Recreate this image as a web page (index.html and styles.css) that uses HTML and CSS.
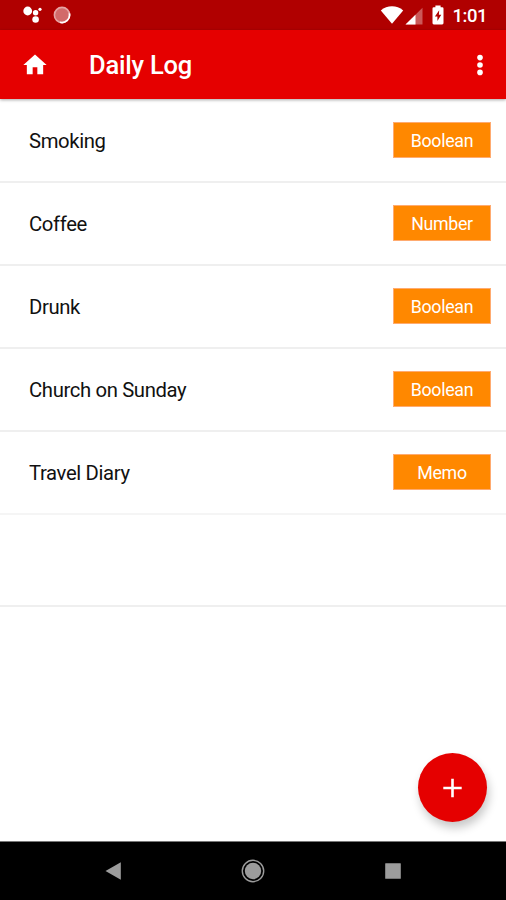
FILE: index.html
```html
<!DOCTYPE html>
<html lang="en">
<head>
  <meta charset="UTF-8">
  <title>Daily Log</title>
  <meta name="viewport" content="width=device-width, initial-scale=1">
  <link rel="stylesheet" href="styles.css">
</head>
<body>
  <div id="app">
    <!-- Status bar -->
    <div id="status-bar">
      <svg class="assistant-icon" width="20" height="18" viewBox="0 0 20 18">
        <circle cx="4.7" cy="5" r="4.4"/>
        <circle cx="12.6" cy="6.7" r="2.7"/>
        <circle cx="17" cy="3.3" r="1.6"/>
        <circle cx="12.6" cy="13.5" r="3.3"/>
      </svg>
      <svg class="sync-icon" width="18" height="18" viewBox="0 0 18 18">
        <circle cx="9" cy="9" r="7.6" fill="#d26a6a" stroke="#e6a3a3" stroke-width="1.6"/>
        <path d="M16.4 7.4A7.6 7.6 0 0 1 7 16.3" fill="none" stroke="#fff" stroke-width="1.7"/>
      </svg>
      <svg class="wifi-icon" width="24" height="18" viewBox="0 0 24 18">
        <path d="M.8 4.4C7.2-1.1 16.8-1.1 23.2 4.4L12 17.8z"/>
      </svg>
      <svg class="signal-icon" width="18" height="18" viewBox="0 0 18 18">
        <path d="M17.5.8V17.5H.5z" fill-opacity=".35"/>
        <path d="M10.5 7.8V17.5H.5z"/>
      </svg>
      <svg class="battery-icon" width="12" height="20" viewBox="0 0 12 20">
        <path d="M3.4.5h5.2v1.7h1.6q1.3 0 1.3 1.3v14.6q0 1.3-1.3 1.3H1.8Q.5 19.4.5 18.1V3.5q0-1.3 1.3-1.3h1.6z"/>
        <path d="M7.2 5.3L2.9 11.5h2.5v4.6l3.9-6.4H6.9z" fill="#b00000"/>
      </svg>
      <span class="clock">1:01</span>
    </div>

    <!-- Toolbar -->
    <div id="toolbar">
      <svg class="home-icon" width="28" height="28" viewBox="0 0 24 24">
        <path d="M10 20v-6h4v6h5v-8h3L12 3 2 12h3v8z"/>
      </svg>
      <h1>Daily Log</h1>
      <svg class="menu-icon" width="8" height="24" viewBox="0 0 8 24">
        <circle cx="4" cy="4.6" r="2.8"/>
        <circle cx="4" cy="12" r="2.8"/>
        <circle cx="4" cy="19.4" r="2.8"/>
      </svg>
    </div>

    <!-- Log items -->
    <div id="log-list">
      <div class="log-item"><span>Smoking</span><button>Boolean</button></div>
      <div class="log-item"><span>Coffee</span><button>Number</button></div>
      <div class="log-item"><span>Drunk</span><button>Boolean</button></div>
      <div class="log-item"><span>Church on Sunday</span><button>Boolean</button></div>
      <div class="log-item last"><span>Travel Diary</span><button>Memo</button></div>
      <div class="log-item empty"></div>
    </div>

    <button id="add-button" aria-label="Add">
      <svg width="20" height="20" viewBox="0 0 20 20">
        <path d="M9.5 .8v18.4M.3 10h18.4"/>
      </svg>
    </button>

    <!-- System navigation -->
    <div id="nav-bar">
      <svg width="24" height="24" viewBox="0 0 24 24">
        <path d="M4.5 12L19.8 3.3v17.4z"/>
      </svg>
      <svg width="24" height="24" viewBox="0 0 24 24">
        <circle cx="12" cy="12" r="8.2"/>
        <circle cx="12" cy="12" r="10.7" fill="none" stroke="#9c9c9c" stroke-width="1.4"/>
      </svg>
      <svg width="24" height="24" viewBox="0 0 24 24">
        <rect x="4.2" y="4.2" width="15.6" height="15.6" rx=".5"/>
      </svg>
    </div>
  </div>
</body>
</html>
```
FILE: styles.css
```css
* {
  box-sizing: border-box;
}
body {
  margin: 0;
  font-family: Roboto, "Liberation Sans", sans-serif;
}
#app {
  position: relative;
  display: flex;
  flex-direction: column;
  height: 900px;
  background: #fff;
  overflow: hidden;
}
/* Status bar */
#status-bar {
  display: flex;
  align-items: center;
  height: 30px;
  padding: 0 19px 0 23px;
  background: #b00000;
  color: #fff;
}
#status-bar svg {
  fill: #fff;
  flex: none;
}
.sync-icon {
  margin-left: 10px;
}
.wifi-icon {
  margin-left: auto;
}
.signal-icon {
  margin: 2px 0 0 1px;
}
.battery-icon {
  margin: 0 9px 0 9px;
}
.clock {
  margin-top: 2px;
  font-size: 18.5px;
  font-weight: 500;
  letter-spacing: -0.5px;
}
/* Toolbar */
#toolbar {
  position: relative;
  display: flex;
  align-items: center;
  height: 69px;
  padding: 0 22px 0 21px;
  background: #e50000;
  color: #fff;
  box-shadow: 0 1px 3px rgba(0, 0, 0, 0.35);
}
#toolbar svg {
  fill: #fff;
}
#toolbar h1 {
  flex: 1;
  margin: 1px 0 0 40px;
  font-size: 25.5px;
  font-weight: 500;
  letter-spacing: -0.2px;
}
/* List */
#log-list {
  flex: 1;
  padding-top: 1px;
}
.log-item {
  display: flex;
  align-items: center;
  justify-content: space-between;
  height: 83px;
  padding: 0 15px 2px 29px;
  border-bottom: 2px solid #efefef;
  font-size: 20.3px;
  letter-spacing: -0.37px;
  color: #111;
}
.log-item span {
  padding-top: 2px;
}
.log-item button {
  width: 98px;
  height: 36px;
  padding: 2px 0 0;
  border: 1px solid #ffab70;
  background: #ff8800;
  color: #fff;
  font-family: inherit;
  font-size: 17.8px;
  letter-spacing: -0.3px;
}
.log-item.last {
  border-bottom-color: #f5f5f5;
}
.log-item.empty {
  height: 92px;
}
/* Floating add button */
#add-button {
  position: absolute;
  right: 19px;
  bottom: 78px;
  display: flex;
  align-items: center;
  justify-content: center;
  width: 69px;
  height: 69px;
  padding: 0;
  border: none;
  border-radius: 50%;
  background: #e50000;
  box-shadow: 2px 6px 10px rgba(0, 0, 0, 0.22);
}
#add-button path {
  stroke: #fff;
  stroke-width: 2.6;
}
/* System navigation */
#nav-bar {
  display: flex;
  align-items: center;
  justify-content: center;
  gap: 116px;
  height: 59px;
  border-top: 1px solid #777;
  background: #000;
}
#nav-bar svg {
  fill: #9c9c9c;
}
```
